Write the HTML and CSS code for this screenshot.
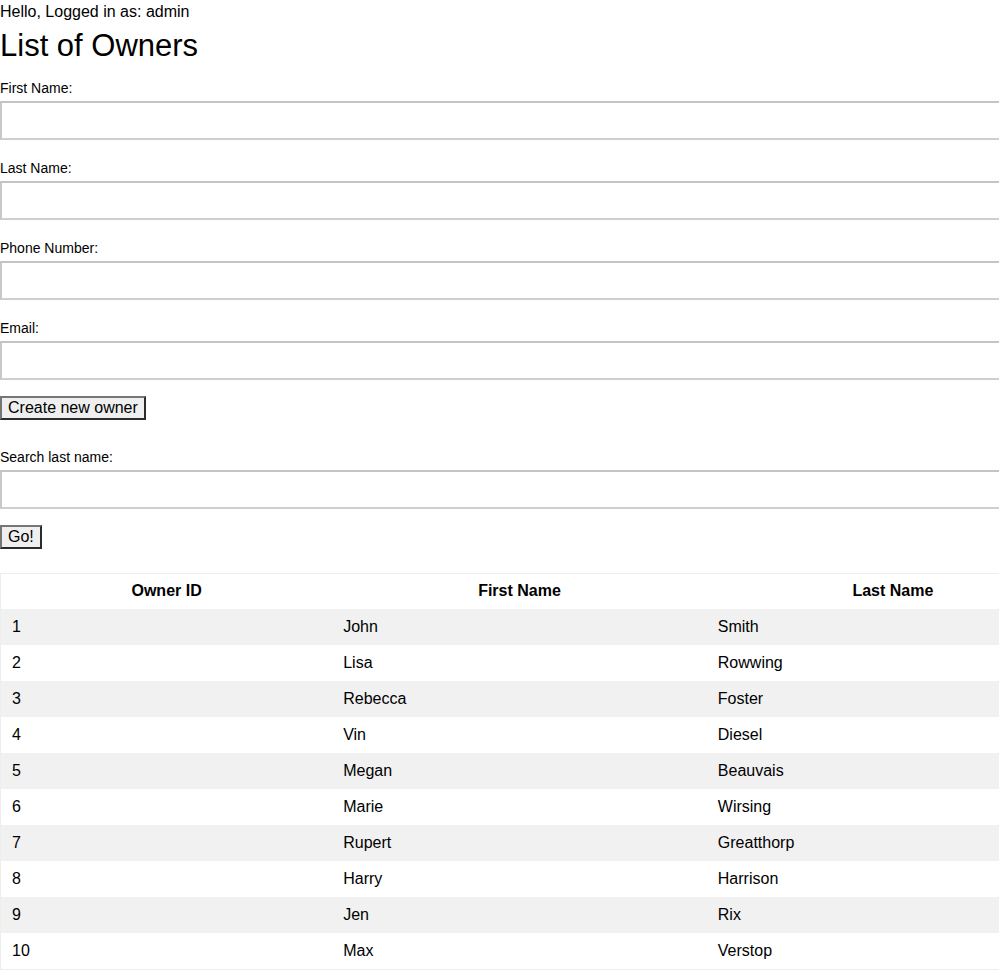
FILE: index.html
```html
<!DOCTYPE html>
<html lang="en">
<head>
<meta charset="utf-8">
<title>List of Owners</title>
<link rel="stylesheet" href="styles.css">
</head>
<body>
<div class="greeting">Hello, Logged in as: admin</div>
<h1 class="title">List of Owners</h1>
<form class="owner-form">
  <label class="field-label" for="fn">First Name:</label>
  <input class="field-input" id="fn" type="text">
  <label class="field-label" for="ln">Last Name:</label>
  <input class="field-input" id="ln" type="text">
  <label class="field-label" for="ph">Phone Number:</label>
  <input class="field-input" id="ph" type="text">
  <label class="field-label" for="em">Email:</label>
  <input class="field-input field-input-last" id="em" type="text">
  <button class="btn" type="button">Create new owner</button>
</form>
<form class="search-form">
  <label class="field-label" for="sl">Search last name:</label>
  <input class="field-input field-input-last" id="sl" type="text">
  <button class="btn" type="button">Go!</button>
</form>
<table class="owners">
  <colgroup>
    <col class="col-id">
    <col class="col-first">
    <col class="col-last">
  </colgroup>
  <thead>
    <tr><th>Owner ID</th><th>First Name</th><th>Last Name</th></tr>
  </thead>
  <tbody>
    <tr><td>1</td><td>John</td><td>Smith</td></tr>
    <tr><td>2</td><td>Lisa</td><td>Rowwing</td></tr>
    <tr><td>3</td><td>Rebecca</td><td>Foster</td></tr>
    <tr><td>4</td><td>Vin</td><td>Diesel</td></tr>
    <tr><td>5</td><td>Megan</td><td>Beauvais</td></tr>
    <tr><td>6</td><td>Marie</td><td>Wirsing</td></tr>
    <tr><td>7</td><td>Rupert</td><td>Greatthorp</td></tr>
    <tr><td>8</td><td>Harry</td><td>Harrison</td></tr>
    <tr><td>9</td><td>Jen</td><td>Rix</td></tr>
    <tr><td>10</td><td>Max</td><td>Verstop</td></tr>
  </tbody>
</table>
</body>
</html>
```

FILE: styles.css
```css
html {
  scrollbar-width: none;
}
html::-webkit-scrollbar {
  display: none;
}
body {
  margin: 0;
  overflow-x: hidden;
  font-family: "Liberation Sans", Arial, sans-serif;
  color: #000;
  background: #fff;
}
.greeting {
  font-size: 16px;
  line-height: 23px;
}
.title {
  margin: 6px 0 17px;
  font-size: 31px;
  line-height: 34px;
  font-weight: normal;
}
.owner-form,
.search-form {
  margin: 0;
}
.field-label {
  display: block;
  font-size: 14px;
  line-height: 16px;
}
.field-input {
  display: block;
  box-sizing: content-box;
  width: 100%;
  height: 35px;
  padding: 0 20px;
  margin: 5px 0 20px;
  border: 2px solid #cfcfcf;
  border-top-color: #c4c4c4;
  border-left-color: #c8c8c8;
  background: #fff;
  font: inherit;
  outline: none;
}
.field-input-last {
  margin-bottom: 16px;
}
.btn {
  display: block;
  margin: 0;
  padding: 0 6px;
  height: 24px;
  font-family: "Liberation Sans", Arial, sans-serif;
  font-size: 16px;
  line-height: 18px;
  color: #000;
  background: #efefef;
  border: 2px solid;
  border-color: #767676 #2b2b2b #2b2b2b #767676;
  border-radius: 0;
}
.owner-form .btn {
  margin-bottom: 29px;
}
.search-form .btn {
  margin-bottom: 24px;
}
.owners {
  border-collapse: collapse;
  width: 1080px;
  border: 1px solid #eeeeee;
  font-size: 16px;
}
.col-id { width: 332px; }
.col-first { width: 375px; }
.col-last { width: 373px; }
.owners th {
  font-weight: bold;
  text-align: center;
  padding: 8px 11px 9px;
  line-height: 18px;
}
.owners td {
  text-align: left;
  padding: 9px 11px;
  line-height: 18px;
}
.owners tbody tr:nth-child(odd) {
  background: #f1f1f1;
}
```
